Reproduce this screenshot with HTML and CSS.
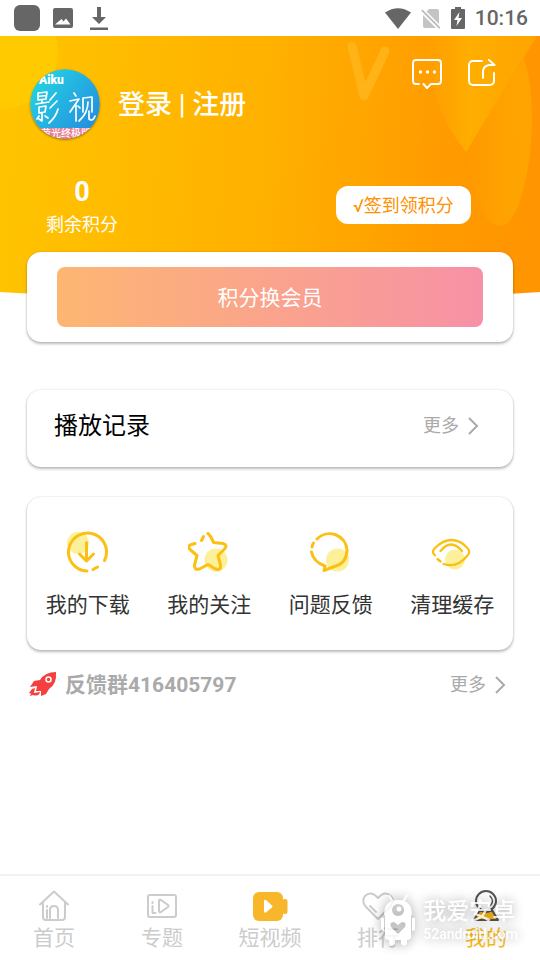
FILE: index.html
```html
<!DOCTYPE html>
<html lang="zh-CN">
<head>
<meta charset="utf-8">
<meta name="viewport" content="width=device-width, initial-scale=1">
<title>我的</title>
<link rel="stylesheet" href="styles.css">
</head>
<body>
<div class="status">
  <div class="status-group status-left">
    <span class="status-app"></span>
    <svg width="20" height="20" viewBox="0 0 20 20" aria-hidden="true"><path fill="#666" fill-rule="evenodd" d="M2 0h16a2 2 0 0 1 2 2v16a2 2 0 0 1-2 2H2a2 2 0 0 1-2-2V2a2 2 0 0 1 2-2zM2 16.500h15.500l-4.500-6-2.500 3-2-2.500z"/></svg>
    <svg width="18" height="24" viewBox="0 0 18 24" aria-hidden="true"><path fill="#666" d="M7 1h4v10h5l-7 7-7-7h5zM0 21.500h18V24H0z"/></svg>
  </div>
  <div class="status-group status-right">
    <svg width="26" height="21" viewBox="0 0 26 21" aria-hidden="true"><path fill="#666" d="M0 4.500Q13-4 26 4.500L13 21z"/></svg>
    <svg width="20" height="21" viewBox="0 0 20 21" aria-hidden="true"><path fill="#c4c4c4" d="M8 1h8a2 2 0 0 1 2 2v13L5.500 3.500zM2 7l13 13H4a2 2 0 0 1-2-2z"/><path stroke="#bbb" stroke-width="1.800" d="M.8 2.200 18.800 20.200"/></svg>
    <svg width="14" height="22" viewBox="0 0 14 22" aria-hidden="true"><path fill="#666" d="M4 0h6v2h3a1 1 0 0 1 1 1v18a1 1 0 0 1-1 1H1a1 1 0 0 1-1-1V3a1 1 0 0 1 1-1h3z"/><path fill="#fff" d="M8.500 5 3 13h3.500L5.500 19 11 11H7.500z"/></svg>
    <time>10:16</time>
  </div>
</div>

<header class="hero">
  <svg class="hero-bg" viewBox="0 0 540 264" preserveAspectRatio="none" aria-hidden="true">
    <defs>
      <linearGradient id="sun" x1="0" y1="0" x2="1" y2="0.03"><stop offset="0" stop-color="#ffc400"/><stop offset=".5" stop-color="#ffb100"/><stop offset=".85" stop-color="#ff9a00"/><stop offset="1" stop-color="#ff9500"/></linearGradient>
      <linearGradient id="beam" x1="0" y1="0" x2="1" y2="0"><stop offset="0" stop-color="#ffb000" stop-opacity="0"/><stop offset=".4" stop-color="#ffb000" stop-opacity=".9"/><stop offset="1" stop-color="#ffa600" stop-opacity=".9"/></linearGradient>
      <linearGradient id="drop" x1="0" y1="0" x2="1" y2="0"><stop offset="0" stop-color="#ffa400" stop-opacity="0"/><stop offset=".6" stop-color="#ffa400" stop-opacity=".9"/><stop offset="1" stop-color="#ffa400"/></linearGradient>
      <clipPath id="bowl"><path d="M0 0H540V256Q270 273 0 256z"/></clipPath>
    </defs>
    <g clip-path="url(#bowl)">
      <path fill="url(#sun)" d="M0 0H540V264H0z"/>
      <path fill="#ffcb00" d="M0 0H56Q62 34 43 55 25 73 0 73z"/>
      <path fill="url(#drop)" d="M524 22Q536 60 530 118 520 190 499 190 478 188 466 116z"/>
      <path fill="url(#beam)" d="M425 0H537L466 116Q428 70 425 0z"/>
      <path fill="none" stroke="#ffb91f" stroke-opacity=".7" stroke-width="9" stroke-linecap="round" stroke-linejoin="round" d="M352 10 364 60 385 15"/>
    </g>
  </svg>

  <div class="profile">
    <svg class="avatar" viewBox="0 0 70 70" role="img" aria-label="影视">
      <defs>
        <linearGradient id="sky" x1="0" y1="0" x2="1" y2="0.8"><stop offset="0" stop-color="#25dce2"/><stop offset="1" stop-color="#238be0"/></linearGradient>
        <clipPath id="disc"><circle cx="35" cy="35" r="35"/></clipPath>
      </defs>
      <g clip-path="url(#disc)">
        <path fill="url(#sky)" d="M0 0H70V70H0z"/>
        <path fill="#e77d96" d="M0 59H70V70H0z"/>
        <text class="avatar-brand" x="9" y="15">Aiku</text>
        <text class="avatar-slogan" x="11" y="68">萤光终极版</text>
        <g fill="none" stroke="#fff" stroke-width="1.700" stroke-linecap="round" stroke-linejoin="round">
          <path d="M8 24 17 23 16 30 8 31zM8 27.500 16 26.500M12 31v3M6 35 19 33M9 38 16 37 15 43 9 44zM12 44 12 52 9 50M9 47 7 50M15 47 18 49M26 24 20 31M27 32 20 39M28 40Q26 48 19 54"/>
          <path d="M44 24 46 27M40 32 49 30 40 43M46 36 46 52M48 37 50 39M53 29 53 43M53 29 62 28 62 43M58 33Q58 44 49 52M59 42 59 50Q63 53 65 47"/>
        </g>
      </g>
    </svg>
    <a class="login" href="#login">登录 | 注册</a>
    <div class="tools">
      <button class="icon-button" type="button" aria-label="消息">
        <svg width="30" height="30" viewBox="0 0 30 30"><g fill="none" stroke="#fff" stroke-width="2" stroke-linecap="round" stroke-linejoin="round"><path d="M7 25H4a3 3 0 0 1-3-3V4a3 3 0 0 1 3-3h22a3 3 0 0 1 3 3v18a3 3 0 0 1-3 3h-7l-4 4-3.500-4"/></g><g fill="#fff"><circle cx="8.500" cy="13" r="1.700"/><circle cx="15.500" cy="13" r="1.700"/><circle cx="22.500" cy="13" r="1.700"/></g></svg>
      </button>
      <button class="icon-button" type="button" aria-label="分享">
        <svg width="30" height="30" viewBox="0 0 30 30"><path fill="none" stroke="#fff" stroke-width="2" stroke-linecap="round" stroke-linejoin="round" d="M14 2H5a4 4 0 0 0-4 4V22a4 4 0 0 0 4 4h17a4 4 0 0 0 4-4v-8M15 19V13Q15 7 21 6h5.500M21 1l5.500 5"/></svg>
      </button>
    </div>
  </div>

  <div class="points">
    <div class="score"><strong>0</strong><span>剩余积分</span></div>
    <button class="checkin" type="button">√签到领积分</button>
  </div>
</header>

<main class="content">
  <section class="card redeem"><button class="redeem-button" type="button">积分换会员</button></section>

  <section class="card history">
    <h2>播放记录</h2>
    <a class="more" href="#history">更多<svg width="12" height="20" viewBox="0 0 12 20" aria-hidden="true"><path d="M2 2 10 10 2 18"/></svg></a>
  </section>

  <nav class="card shortcuts" aria-label="功能">
    <a href="#downloads">
      <svg width="42" height="42" viewBox="0 0 42 42" aria-hidden="true"><circle class="spot" cx="11" cy="12" r="11"/><path class="line" d="M37.500 29.500A19 19 0 1 0 20 40M26 38.500l4.500-2.500M19.500 11.500V29.500M12.500 23l7 7 7-7"/></svg>
      <span>我的下载</span>
    </a>
    <a href="#follows">
      <svg width="42" height="42" viewBox="0 0 42 42" aria-hidden="true"><circle class="spot" cx="28" cy="29" r="11.500"/><path class="line" d="M20 2.500Q23 5 25.500 11.500L35 12.500Q40 14 36.500 18L30 24.500 32.500 34Q33 40 27.500 38L20 33.500 11.500 38Q6 39.500 6.500 34L9 24.500 2 18.500Q-1 14.500 3.500 13.500L7 12.500M13.500 9.500l2-4"/></svg>
      <span>我的关注</span>
    </a>
    <a href="#feedback">
      <svg width="42" height="42" viewBox="0 0 42 42" aria-hidden="true"><circle class="spot" cx="27.500" cy="29" r="11.500"/><path class="line" d="M7 8A17.500 17.500 0 0 1 37 19Q37 32 24.500 35.500L14 39.500 15 35Q3.500 31 1.500 21M2 16Q2.500 13.500 3.500 12"/></svg>
      <span>问题反馈</span>
    </a>
    <a href="#cache">
      <svg width="42" height="42" viewBox="0 0 42 42" aria-hidden="true"><circle class="spot" cx="24" cy="28.500" r="10"/><path class="line" stroke-width="2.300" d="M4 24.500Q0 21 4 17 12 9 20.500 9 29 9 36 16.500 40.500 20.500 36 25 26 37.500 12.500 33M6.500 28l3 2.500M9.500 20Q20 7 31 20"/></svg>
      <span>清理缓存</span>
    </a>
  </nav>

  <section class="group">
    <svg width="28" height="26" viewBox="0 0 28 26" aria-hidden="true"><path fill="#f5403f" d="M27 0Q28 12 20 17L17 22 12 24 12 19 7 19 8 14 1 15 5 9 11 8Q16 0 27 0zM3 17 6 16 5 21 11 20Q10 25 4 23L1 24 2 21.500 0 21z"/><circle cx="19.500" cy="7.500" r="2.500" fill="none" stroke="#fff" stroke-width="1.500"/></svg>
    <strong>反馈群416405797</strong>
    <a class="more" href="#group">更多<svg width="12" height="20" viewBox="0 0 12 20" aria-hidden="true"><path d="M2 2 10 10 2 18"/></svg></a>
  </section>
</main>

<nav class="tabs" aria-label="主导航">
  <a href="#home">
    <svg width="36" height="32" viewBox="0 0 36 32" aria-hidden="true"><g class="tab-line"><path d="M4 14.500 18 1.500 32 14.500M7 13V27a3 3 0 0 0 3 3h16a3 3 0 0 0 3-3V13"/><path d="M14 28V20q0-4 4-4t4 4v8M11 20v8M11 16v1"/></g></svg>
    <span>首页</span>
  </a>
  <a href="#topics">
    <svg width="36" height="32" viewBox="0 0 36 32" aria-hidden="true"><g class="tab-line"><rect x="4" y="5" width="28" height="22" rx="2"/><path d="M15 11v10q0 2 2 1l7-5q1-1 0-2l-7-5q-2-1-2 1zM8.500 16v7h3M8.500 12v1"/></g></svg>
    <span>专题</span>
  </a>
  <a href="#shorts">
    <svg width="36" height="32" viewBox="0 0 36 32" aria-hidden="true"><rect x="1" y="2" width="30" height="29" rx="6" fill="#f8b62b"/><rect x="30.500" y="9" width="5" height="15" rx="2" fill="#f8b62b"/><path fill="#fff" d="M12 11.500q0-3 2.500-1L20 15.500q1 1 0 2L14.500 22q-2.500 2-2.500-1z"/></svg>
    <span>短视频</span>
  </a>
  <a href="#rank">
    <svg width="36" height="32" viewBox="0 0 36 32" aria-hidden="true"><g class="tab-line"><path d="M18 29 6 17Q1 11 5 6 11 0 18 8 25 0 31 6 35 11 30 17zM10 16l6 6"/></g></svg>
    <span>排行</span>
  </a>
  <a class="current" href="#me" aria-current="page">
    <svg width="36" height="32" viewBox="0 0 36 32" aria-hidden="true"><path fill="#f8b61c" stroke="#555" stroke-width="2" stroke-linejoin="round" d="M12 20 6 30H30L24 20Q18 24 12 20z"/><circle cx="18" cy="11" r="10" fill="#fff" stroke="#555" stroke-width="2"/><path fill="none" stroke="#555" stroke-width="1.500" stroke-linecap="round" d="M22 6q5 5 0 10"/></svg>
    <span>我的</span>
  </a>
  <div class="watermark">
    <svg width="34" height="52" viewBox="0 0 34 52" aria-hidden="true"><path fill="none" stroke="#fff" stroke-width="2" d="M8 1 12 8M26 1 22 8"/><path fill="#fff" fill-rule="evenodd" d="M3 21Q3 6 17 6T31 21zM17 10a6 6 0 1 0 .1 0zM4 21H30V43Q30 46 26 46V50Q23 53 20 50V46H14V50Q11 53 8 50V46Q4 46 4 43zM17 40 24 33Q26 28 21 28L17 31 13 28Q8 28 10 33zM0 24H3V37Q0 37 0 34zM31 24H34V34Q34 37 31 37z"/><circle cx="18" cy="15" r="2.500" fill="#fff"/></svg>
    <div><b>我爱安卓</b><small>52android.com</small></div>
  </div>
</nav>
</body>
</html>
```
FILE: styles.css
```css
* { box-sizing: border-box; }

body {
  margin: 0;
  min-height: 100vh;
  display: flex;
  flex-direction: column;
  background: #fff;
  color: #333;
  font-family: Roboto, "Noto Sans CJK SC", sans-serif;
  font-size: 21px;
  line-height: 30px;
}

a { color: inherit; text-decoration: none; }
button { padding: 0; border: 0; font: inherit; cursor: pointer; }
svg { display: block; flex: none; }

.status {
  height: 36px;
  padding: 0 12px 0 14px;
  display: flex;
  justify-content: space-between;
  align-items: center;
  color: #666;
}
.status-group { display: flex; align-items: center; }
.status-left { gap: 13px; }
.status-left svg:last-child { margin-left: 4px; }
.status-right { gap: 10px; }
.status-app { width: 26px; height: 26px; border-radius: 6px; background: #666; }
.status time { font-weight: 500; }

.hero {
  position: relative;
  padding: 33px 42px 0 30px;
  color: #fff;
}
.hero-bg {
  position: absolute;
  inset: 0 0 auto;
  width: 100%;
  height: 264px;
  z-index: -1;
}
.profile { display: flex; align-items: flex-start; }
.avatar {
  width: 70px;
  height: 70px;
  border-radius: 50%;
  box-shadow: 0 1px 2px rgba(90, 70, 0, .6);
}
.avatar-brand { fill: #fff; font: 900 12px Roboto, sans-serif; }
.avatar-slogan { fill: #fff; font: 500 10px "Noto Sans CJK SC", sans-serif; }
.login { margin-left: 18px; font-size: 27px; font-weight: 500; line-height: 72px; }
.tools { margin: -10px 0 0 auto; display: flex; gap: 26px; }
.icon-button { width: 30px; height: 30px; background: none; }

.points {
  margin-top: 33px;
  padding: 0 27px 0 16px;
  display: flex;
  justify-content: space-between;
  align-items: flex-start;
}
.score { display: flex; flex-direction: column; align-items: center; font-size: 18px; }
.score strong { font-size: 27px; line-height: 36px; }
.checkin {
  width: 135px;
  height: 38px;
  margin-top: 12px;
  padding-top: 2px;
  border-radius: 12px;
  background: #fff;
  color: #ff9000;
  font-size: 18px;
}

.content { padding: 12px 27px 24px; }
.card {
  border-radius: 14px;
  background: #fff;
  box-shadow: 0 2px 3px rgba(0, 0, 0, .26), 0 0 2px rgba(0, 0, 0, .16);
}
.redeem { padding: 15px 30px; }
.redeem-button {
  display: block;
  width: 100%;
  height: 60px;
  padding-top: 2px;
  border-radius: 8px;
  background: linear-gradient(90deg, #fdb672, #f791a6);
  color: #fff;
}
.history {
  margin-top: 48px;
  padding: 18px 34px 23px 27px;
  display: flex;
  justify-content: space-between;
  align-items: center;
}
.history h2 { margin: 0; color: #000; font-size: 24px; font-weight: 400; line-height: 36px; }
.more { display: flex; align-items: center; gap: 8px; color: #aaa; font-size: 18px; }
.more path { fill: none; stroke: #aaa; stroke-width: 2; }

.shortcuts {
  margin-top: 30px;
  padding: 34px 0 30px;
  display: grid;
  grid-template-columns: repeat(4, 1fr);
}
.shortcuts a { display: flex; flex-direction: column; align-items: center; gap: 17px; }
.spot { fill: #fcf09a; }
.line { fill: none; stroke: #fbc012; stroke-linecap: round; stroke-linejoin: round; }
.line:not([stroke-width]) { stroke-width: 3; }

.group { margin-top: 20px; padding: 0 7px 0 2px; display: flex; align-items: center; }
.group strong { margin-left: 8px; color: #aaa; }
.group .more { margin-left: auto; }

.tabs {
  position: sticky;
  bottom: 0;
  margin-top: auto;
  padding: 14px 0 7px;
  display: grid;
  grid-template-columns: repeat(5, 1fr);
  border-top: 2px solid #f2f2f2;
  background: #fff;
  color: #ccc;
}
.tabs a { display: flex; flex-direction: column; align-items: center; gap: 1px; }
.tabs .current { color: #fabd16; }
.tab-line { fill: none; stroke: #ccc; stroke-width: 2; stroke-linecap: round; stroke-linejoin: round; }

.watermark {
  position: absolute;
  right: 22px;
  bottom: 14px;
  display: flex;
  align-items: center;
  gap: 8px;
  color: #fff;
  filter: drop-shadow(0 0 6px rgba(0, 0, 0, .45));
  opacity: .8;
  pointer-events: none;
}
.watermark b { display: block; font-size: 23px; font-weight: 500; line-height: 28px; }
.watermark small { display: block; font-size: 14px; font-weight: 500; line-height: 16px; }
```
